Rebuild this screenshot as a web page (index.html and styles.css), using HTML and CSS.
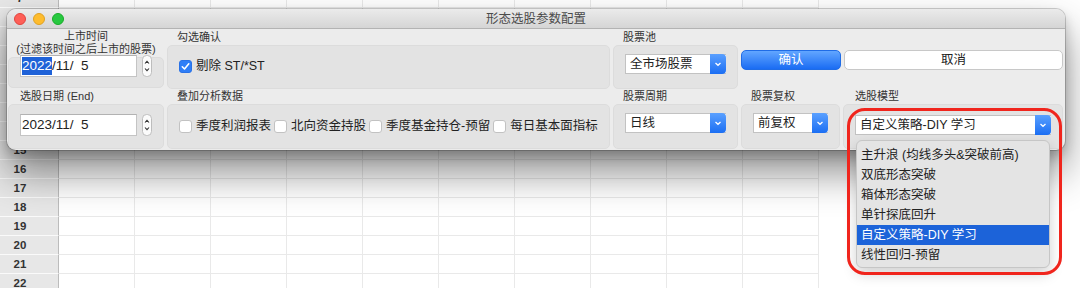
FILE: index.html
```html
<!DOCTYPE html>
<html lang="zh-CN">
<head>
<meta charset="utf-8">
<title>形态选股参数配置</title>
<link rel="stylesheet" href="styles.css">
</head>
<body>
<div class="screen">
  <div class="sheet">
    <div class="row"><div class="rh"><span>7</span></div><div class="cells"></div></div>
    <div class="row"><div class="rh"></div><div class="cells"></div></div>
    <div class="row"><div class="rh"></div><div class="cells"></div></div>
    <div class="row"><div class="rh"></div><div class="cells"></div></div>
    <div class="row"><div class="rh"></div><div class="cells"></div></div>
    <div class="row"><div class="rh"></div><div class="cells"></div></div>
    <div class="row"><div class="rh"></div><div class="cells"></div></div>
    <div class="row"><div class="rh"></div><div class="cells"></div></div>
    <div class="row"><div class="rh"><span>15</span></div><div class="cells"></div></div>
    <div class="row"><div class="rh"><span>16</span></div><div class="cells"></div></div>
    <div class="row"><div class="rh"><span>17</span></div><div class="cells"></div></div>
    <div class="row"><div class="rh"><span>18</span></div><div class="cells"></div></div>
    <div class="row"><div class="rh"><span>19</span></div><div class="cells"></div></div>
    <div class="row"><div class="rh"><span>20</span></div><div class="cells"></div></div>
    <div class="row"><div class="rh"><span>21</span></div><div class="cells"></div></div>
    <div class="row"><div class="rh"><span>22</span></div><div class="cells"></div></div>
  </div>

  <div class="dialog">
    <div class="titlebar">
      <div class="lights">
        <i class="light red"></i><i class="light yellow"></i><i class="light green"></i>
      </div>
      <div class="title">形态选股参数配置</div>
    </div>

    <div class="body">
      <div class="c1top">
        <div class="lbl2">上市时间<br>(过滤该时间之后上市的股票)</div>
        <div class="box short">
          <div class="datefield lift"><span class="sel">2022</span>/11/  5</div>
          <div class="stepper">
            <svg width="10" height="22" viewBox="0 0 10 22"><rect x="0.5" y="0.5" width="9" height="21" rx="4" fill="#fbfbfb" stroke="#bdbdbd"/><path d="M3 8.5 L5 6.3 L7 8.5" fill="none" stroke="#333" stroke-width="1.1"/><path d="M3 13.5 L5 15.7 L7 13.5" fill="none" stroke="#333" stroke-width="1.1"/></svg>
          </div>
        </div>
      </div>

      <div class="lbl c2 r1">勾选确认</div>
      <div class="box c2 r2 pad-check">
        <label class="chk">
          <span class="cb on"><svg width="13" height="13" viewBox="0 0 13 13"><path d="M3.3 6.8 L5.5 9 L9.8 3.8" fill="none" stroke="#fff" stroke-width="1.6" stroke-linecap="round" stroke-linejoin="round"/></svg></span>
          <span class="chktext">剔除 ST/*ST</span>
        </label>
      </div>

      <div class="lbl c3 r1">股票池</div>
      <div class="box c3 r2 pad-sel">
        <div class="select w101"><span class="val">全市场股票</span><span class="arrow"><svg width="16" height="20" viewBox="0 0 16 20"><path d="M5.5 9 L8 11.3 L10.5 9" fill="none" stroke="#fff" stroke-width="1.3"/></svg></span></div>
      </div>

      <div class="btns">
        <button class="btn primary">确认</button>
        <button class="btn">取消</button>
      </div>

      <div class="lbl c1 r3 in12">选股日期 (End)</div>
      <div class="box c1 r4 pad-date">
        <div class="datefield">2023/11/  5</div>
        <div class="stepper">
          <svg width="10" height="22" viewBox="0 0 10 22"><rect x="0.5" y="0.5" width="9" height="21" rx="4" fill="#fbfbfb" stroke="#bdbdbd"/><path d="M3 8.5 L5 6.3 L7 8.5" fill="none" stroke="#333" stroke-width="1.1"/><path d="M3 13.5 L5 15.7 L7 13.5" fill="none" stroke="#333" stroke-width="1.1"/></svg>
        </div>
      </div>

      <div class="lbl c2 r3">叠加分析数据</div>
      <div class="box c2 r4 pad-checks">
        <label class="chk"><span class="cb"></span><span class="chktext">季度利润报表</span></label>
        <label class="chk"><span class="cb"></span><span class="chktext">北向资金持股</span></label>
        <label class="chk"><span class="cb"></span><span class="chktext">季度基金持仓-预留</span></label>
        <label class="chk"><span class="cb"></span><span class="chktext">每日基本面指标</span></label>
      </div>

      <div class="lbl c3 r3">股票周期</div>
      <div class="box c3 r4 pad-sel">
        <div class="select w101"><span class="val">日线</span><span class="arrow"><svg width="16" height="20" viewBox="0 0 16 20"><path d="M5.5 9 L8 11.3 L10.5 9" fill="none" stroke="#fff" stroke-width="1.3"/></svg></span></div>
      </div>

      <div class="lbl c4 r3">股票复权</div>
      <div class="box c4 r4 pad-sel">
        <div class="select w75"><span class="val">前复权</span><span class="arrow"><svg width="16" height="20" viewBox="0 0 16 20"><path d="M5.5 9 L8 11.3 L10.5 9" fill="none" stroke="#fff" stroke-width="1.3"/></svg></span></div>
      </div>

      <div class="lbl c5 r3 in12">选股模型</div>
      <div class="box c5 r4 pad-model">
        <div class="select w196"><span class="val">自定义策略-DIY 学习</span><span class="arrow"><svg width="16" height="20" viewBox="0 0 16 20"><path d="M5.5 9 L8 11.3 L10.5 9" fill="none" stroke="#fff" stroke-width="1.3"/></svg></span></div>
      </div>
    </div>
  </div>

  <ul class="popup">
    <li>主升浪 (均线多头&amp;突破前高)</li>
    <li>双底形态突破</li>
    <li>箱体形态突破</li>
    <li>单针探底回升</li>
    <li class="active">自定义策略-DIY 学习</li>
    <li>线性回归-预留</li>
  </ul>

  <div class="mark"></div>
</div>
</body>
</html>
```

FILE: styles.css
```css
* { box-sizing: border-box; }

html, body {
  margin: 0;
  padding: 0;
  background: #ffffff;
}

body {
  font-family: "Liberation Sans", "Noto Sans CJK SC", sans-serif;
  color: #222;
}

.screen {
  position: relative;
  width: 1080px;
  height: 288px;
  overflow: hidden;
  background: #fff;
}

/* ---------- spreadsheet behind ---------- */
.sheet {
  margin-top: -11px;
}

.row {
  display: flex;
  height: 19px;
}

.rh {
  width: 59px;
  height: 19px;
  background: #e7e7e7;
  border-right: 1px solid #bcbcbc;
  border-bottom: 1px solid #fafafa;
  font-size: 11.5px;
  font-weight: bold;
  color: #333;
  line-height: 18px;
}

.rh span {
  display: block;
  width: 40px;
  text-align: center;
}

.cells {
  width: 760px;
  height: 19px;
  border-bottom: 1px solid #e9e9e9;
  background: repeating-linear-gradient(to right, transparent 0 75px, #e9e9e9 75px 76px);
}

/* ---------- dialog ---------- */
.dialog {
  position: absolute;
  left: 7px;
  top: 9px;
  width: 1058px;
  height: 141px;
  border-radius: 9px;
  background: #ececec;
  overflow: hidden;
  box-shadow: 0 0 0 1px rgba(0, 0, 0, 0.18), 0 22px 40px rgba(0, 0, 0, 0.45), 0 6px 12px rgba(0, 0, 0, 0.2);
}

.titlebar {
  position: relative;
  height: 20px;
  background: linear-gradient(#ebebeb, #d5d5d5);
  border-bottom: 1px solid #b3b3b3;
  display: flex;
  align-items: center;
  justify-content: center;
}

.lights {
  position: absolute;
  left: 7px;
  top: 4px;
  display: flex;
  gap: 7px;
}

.light {
  display: block;
  width: 12px;
  height: 12px;
  border-radius: 50%;
}
.light.red { background: #fe5f57; border: 0.5px solid #e0443e; }
.light.yellow { background: #febc2e; border: 0.5px solid #dea123; }
.light.green { background: #28c840; border: 0.5px solid #1aab29; }

.title {
  font-size: 12.5px;
  color: #4b4b4b;
  line-height: 20px;
}

.body {
  display: grid;
  grid-template-columns: 156px 443px 125px 99px 220px;
  grid-template-rows: 16px 44px 15px 45px;
  column-gap: 3px;
  padding-left: 1px;
}

.c1 { grid-column: 1; }
.c2 { grid-column: 2; }
.c3 { grid-column: 3; }
.c4 { grid-column: 4; }
.c5 { grid-column: 5; }
.r1 { grid-row: 1; }
.r2 { grid-row: 2; }
.r3 { grid-row: 3; }
.r4 { grid-row: 4; }

.lbl {
  font-size: 11px;
  color: #333;
  line-height: 16px;
  padding-left: 10px;
  white-space: nowrap;
}
.r3.lbl { line-height: 15px; }
.lbl.in12 { padding-left: 12px; }

.box {
  background: #e3e3e3;
  border: 1px solid #dcdcdc;
  border-radius: 5px;
  display: flex;
  align-items: flex-start;
}

.c1top {
  grid-column: 1;
  grid-row: 1 / span 2;
  display: flex;
  flex-direction: column;
}

.lbl2 {
  height: 28px;
  font-size: 11px;
  line-height: 13px;
  padding-top: 1px;
  color: #333;
  text-align: center;
  white-space: nowrap;
}

.box.short {
  height: 31px;
  padding-left: 11px;
}

.lift { margin-top: -3px; }
.box.short .stepper { margin-top: -3px; }

.pad-date { padding: 9px 0 0 11px; }
.pad-check { padding: 13px 0 0 11px; }
.pad-checks { padding: 14px 0 0 11px; gap: 3px; }
.pad-sel { padding: 8px 0 0 11px; }
.pad-model { padding: 10px 0 0 11px; }

/* date field */
.datefield {
  width: 117px;
  height: 22px;
  background: #fff;
  border: 1px solid #c4c4c4;
  border-top-color: #b2b2b2;
  font-size: 13.5px;
  line-height: 20px;
  padding-left: 1px;
  white-space: pre;
  color: #222;
}

.datefield .sel {
  background: #1f62d8;
  color: #fff;
  padding: 1px 0 2px;
}

.stepper {
  width: 10px;
  height: 22px;
  margin-left: 5px;
}
.stepper svg { display: block; }

/* checkbox */
.chk {
  display: flex;
  align-items: center;
  height: 14px;
  gap: 4px;
  white-space: nowrap;
}

.cb {
  display: block;
  width: 13px;
  height: 13px;
  border-radius: 3px;
  background: #fff;
  border: 1px solid #c2c2c2;
  flex: none;
}

.cb.on {
  background: #2f7ef7;
  border-color: #2a72e6;
}
.cb.on svg { display: block; margin: -1px 0 0 -1px; }

.chktext {
  font-size: 12.5px;
  color: #222;
  line-height: 14px;
}

/* select */
.select {
  display: flex;
  height: 20px;
  background: #fff;
  border: 1px solid #c2c2c2;
  border-right: none;
}
.w101 { width: 101px; }
.w75 { width: 75px; }
.w196 { width: 196px; }

.select .val {
  flex: 1;
  font-size: 12.5px;
  line-height: 18px;
  padding-left: 4px;
  white-space: nowrap;
  color: #222;
}

.select .arrow {
  width: 16px;
  height: 20px;
  margin-top: -1px;
  border-radius: 0 4px 4px 0;
  background: linear-gradient(#5aa0ff, #1b6ef3);
}
.select .arrow svg { display: block; }

/* buttons */
.btns {
  grid-column: 4 / span 2;
  grid-row: 2;
  display: flex;
  gap: 3px;
  padding-top: 5px;
  align-items: flex-start;
}

.btn {
  height: 20px;
  border-radius: 5px;
  font-family: "Liberation Sans", "Noto Sans CJK SC", sans-serif;
  font-size: 12.5px;
  line-height: 18px;
  padding: 0;
  background: #fff;
  border: 1px solid #c8c8c8;
  color: #222;
  flex: 1;
}

.btn.primary {
  flex: none;
  width: 100px;
  background: linear-gradient(#62a6ff, #1a6cf3);
  border: 1px solid #1f6ce6;
  color: #fff;
}

/* dropdown popup */
.popup {
  position: absolute;
  left: 856px;
  top: 140px;
  width: 194px;
  height: 128px;
  margin: 0;
  padding: 4px 0;
  list-style: none;
  background: #e4e4e4;
  border: 1px solid #c6c6c6;
  border-radius: 6px;
  box-shadow: 0 6px 14px rgba(0, 0, 0, 0.18);
}

.popup li {
  height: 20px;
  font-size: 12.5px;
  line-height: 20px;
  padding-left: 4px;
  color: #222;
  white-space: nowrap;
}

.popup li.active {
  background: #1c63d9;
  color: #fff;
}

/* red annotation */
.mark {
  position: absolute;
  left: 847px;
  top: 108px;
  width: 215px;
  height: 167px;
  border: 3px solid #f0251d;
  border-radius: 18px;
}
```
